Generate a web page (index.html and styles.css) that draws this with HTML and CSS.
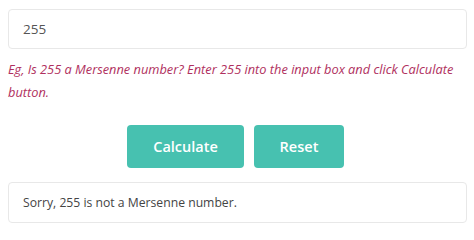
FILE: index.html
```html
<!DOCTYPE html>
<html lang="en">
<head>
<meta charset="utf-8">
<link rel="stylesheet" href="styles.css">
</head>
<body>
<div class="calc">
  <div class="field">255</div>
  <p class="hint">Eg, Is 255 a Mersenne number? Enter 255 into the input box and click Calculate button.</p>
  <div class="actions">
    <button class="btn btn-calc">Calculate</button>
    <button class="btn btn-reset">Reset</button>
  </div>
  <div class="result">Sorry, 255 is not a Mersenne number.</div>
</div>
</body>
</html>
```
FILE: styles.css
```css
* { box-sizing: border-box; }
html, body { background: #ffffff; }
body {
  margin: 0;
  padding: 9px 8px 0 8px;
  font-family: "Open Sans", "Liberation Sans", sans-serif;
}
.calc {
  display: flex;
  flex-direction: column;
  width: 459px;
}
.field {
  height: 40px;
  border: 1px solid #e8e8e8;
  border-radius: 4px;
  padding: 0 14px;
  display: flex;
  align-items: center;
  font-size: 13.5px;
  color: #555555;
}
.hint {
  margin: 9px 0 0 0;
  font-size: 12.8px;
  line-height: 23px;
  font-style: italic;
  color: #b0305e;
}
.actions {
  display: flex;
  justify-content: center;
  gap: 10px;
  margin-top: 21px;
  padding-right: 4px;
}
.btn {
  height: 43px;
  border: none;
  border-radius: 4px;
  background: #47c1b0;
  color: #ffffff;
  font-family: "Open Sans", "Liberation Sans", sans-serif;
  font-weight: 600;
  font-size: 14.5px;
}
.btn-calc { width: 117px; }
.btn-reset { width: 90px; }
.result {
  margin-top: 14px;
  height: 41px;
  border: 1px solid #e8e8e8;
  border-radius: 4px;
  padding: 0 14px;
  display: flex;
  align-items: center;
  font-size: 12.2px;
  color: #444444;
}
```
